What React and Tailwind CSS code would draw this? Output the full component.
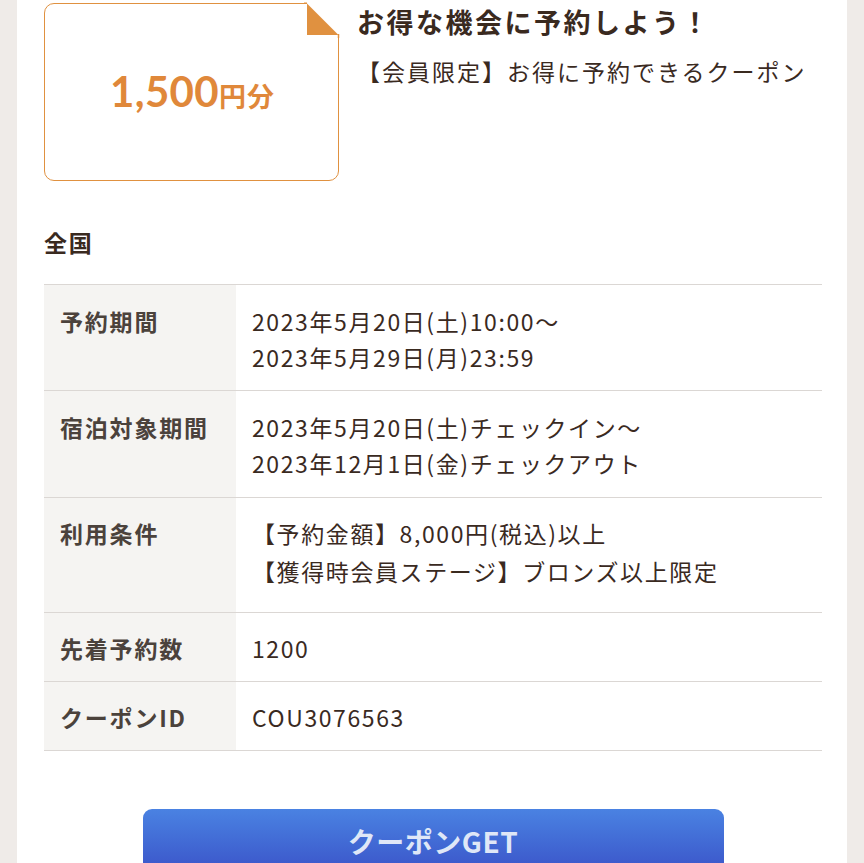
export default function App() {
  const rows = [
    { label: "予約期間", lines: ["2023年5月20日(土)10:00〜", "2023年5月29日(月)23:59"], cls: "pt-[18px] pb-[15px]", lh: "leading-[36px]" },
    { label: "宿泊対象期間", lines: ["2023年5月20日(土)チェックイン〜", "2023年12月1日(金)チェックアウト"], cls: "pt-[18px] pb-[16px]", lh: "leading-[36px]" },
    { label: "利用条件", lines: ["【予約金額】8,000円(税込)以上", "【獲得時会員ステージ】ブロンズ以上限定"], cls: "pt-[16px] pb-[22px]", lh: "leading-[38px]" },
    { label: "先着予約数", lines: ["1200"], cls: "pt-[17px] pb-[15px]", lh: "leading-[36px]" },
    { label: "クーポンID", lines: ["COU3076563"], cls: "pt-[17px] pb-[15px]", lh: "leading-[36px]" },
  ];
  return (
    <div
      className="h-[863px] overflow-hidden bg-[#efebe8] px-[17px]"
      style={{ fontFamily: '"Noto Sans CJK JP", "Noto Sans", sans-serif' }}
    >
      <div className="h-full bg-white pl-[27px] pr-[25px] pt-[3px] text-[#3a2a1f]">
        <div className="flex">
          <div className="relative flex h-[178px] w-[295px] shrink-0 items-center justify-center rounded-[10px] border-[1.5px] border-[#e09140] bg-white">
            <div className="flex items-baseline text-[#e0883a] font-bold -mt-[2px] ml-[2px]">
              <span className="text-[42px] leading-none tracking-[0.3px]" style={{ fontFamily: 'Lato, "Noto Sans", sans-serif' }}>1,500</span>
              <span className="text-[27px] leading-none tracking-[1px]">円分</span>
            </div>
            <svg className="absolute -right-[2px] -top-[2px]" width="36" height="36" viewBox="0 0 36 36">
              <rect x="0" y="0" width="36" height="36" fill="#ffffff" />
              <polygon points="3,1.5 3,33 34.5,33" fill="#e09140" />
              <line x1="34.5" y1="32" x2="34.5" y2="36" stroke="#e09140" strokeWidth="1.5" />
              <line x1="0" y1="1.25" x2="3" y2="1.25" stroke="#e09140" strokeWidth="1.5" />
            </svg>
          </div>
          <div className="ml-[18px] pt-[1px]">
            <div className="text-[27px] font-bold leading-[36px] tracking-[2.5px] text-[#3a2a1f]">お得な機会に予約しよう！</div>
            <div className="mt-[16px] text-[23px] leading-[30px] tracking-[2px] text-[#3a2a1f]">【会員限定】お得に予約できるクーポン</div>
          </div>
        </div>

        <div className="mt-[46px] text-[23px] font-bold leading-[30px] tracking-[1.8px] text-[#3a2a1f]">全国</div>

        <div className="mt-[27px] border-t border-[#dbd7d4]">
          {rows.map((r) => (
            <div key={r.label} className="flex border-b border-[#dbd7d4]">
              <div className={`w-[192px] shrink-0 bg-[#f5f4f2] pl-[16px] text-[23px] font-bold tracking-[1.8px] text-[#4b423c] ${r.cls} ${r.lh}`}>
                {r.label}
              </div>
              <div className={`pl-[16px] text-[23px] tracking-[1.6px] text-[#3a2a1f] ${r.cls} ${r.lh}`}>
                {r.lines.map((l) => (
                  <div key={l}>{l}</div>
                ))}
              </div>
            </div>
          ))}
        </div>

        <div className="mt-[58px] flex justify-center">
          <div className="flex h-[70px] w-[581px] items-start justify-center rounded-[9px] bg-gradient-to-b from-[#4a82e2] to-[#3a4fc6] pt-[12px]">
            <span className="text-[28px] font-bold leading-[40px] tracking-[0.5px] text-[#dfe7f7]">クーポンGET</span>
          </div>
        </div>
      </div>
    </div>
  );
}
